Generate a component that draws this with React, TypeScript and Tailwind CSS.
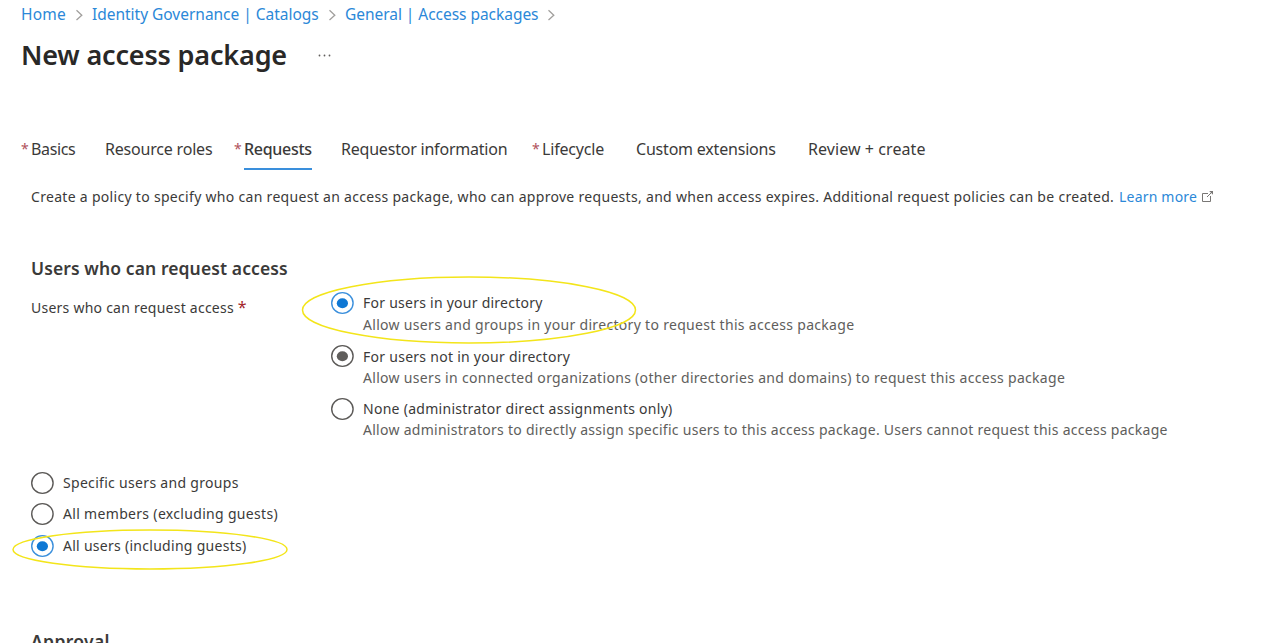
import React from "react";

const crumbs = [
  { label: "Home", cls: "w-[45px] tracking-[0.2px]" },
  { label: "Identity Governance | Catalogs", cls: "w-[227px] tracking-[-0.02px]" },
  { label: "General | Access packages", cls: "w-[193px] tracking-[-0.04px]" },
];

const tabs = [
  { label: "Basics", cls: "w-[45px] mr-[29px] tracking-[-0.35px]", required: true },
  { label: "Resource roles", cls: "w-[108px] mr-[21px] tracking-[-0.2px]" },
  { label: "Requests", cls: "w-[68px] mr-[29px] tracking-[-0.3px]", required: true, active: true },
  { label: "Requestor information", cls: "w-[166px] mr-[25px] tracking-[-0.21px]" },
  { label: "Lifecycle", cls: "w-[63px] mr-[31px] tracking-[-0.17px]", required: true },
  { label: "Custom extensions", cls: "w-[140px] mr-[32px] tracking-[-0.2px]" },
  { label: "Review + create", cls: "w-[118px] tracking-[0.07px]" },
];

function Radio({ state }: { state: "off" | "blue" | "gray" }) {
  const stroke = state === "blue" ? "#3a8fdc" : "#5b5957";
  const fill = state === "blue" ? "#0f78d4" : "#605e5c";
  return (
    <svg width="24" height="24" viewBox="0 0 24 24" className="shrink-0" fill="none">
      <ellipse cx="12.4" cy="12" rx="10.7" ry="10.4" stroke={stroke} strokeWidth="1.4" />
      {state !== "off" && <ellipse cx="12.4" cy="12.2" rx="5.6" ry="5" fill={fill} />}
    </svg>
  );
}

const audience = [
  { state: "blue" as const, title: "For users in your directory", text: "Allow users and groups in your directory to request this access package", track: "tracking-[0.25px] leading-[24px]", textTrack: "tracking-[0.31px] leading-[22px]" },
  { state: "gray" as const, title: "For users not in your directory", text: "Allow users in connected organizations (other directories and domains) to request this access package", track: "tracking-[0.27px] leading-[26px]", textTrack: "tracking-[0.31px] leading-[22px]" },
  { state: "off" as const, title: "None (administrator direct assignments only)", text: "Allow administrators to directly assign specific users to this access package. Users cannot request this access package", track: "tracking-[0.28px] leading-[24px]", textTrack: "tracking-[0.275px] leading-[20px]" },
];

const scope = [
  { state: "off" as const, label: "Specific users and groups", track: "h-[31px] tracking-[0.31px]" },
  { state: "off" as const, label: "All members (excluding guests)", track: "h-[32px] tracking-[0.32px]" },
  { state: "blue" as const, label: "All users (including guests)", track: "h-[31px] tracking-[0.28px]" },
];

export default function App() {
  return (
    <main className="relative h-[643px] w-[1269px] overflow-hidden bg-white font-['Noto_Sans','Open_Sans',sans-serif] text-[14px] whitespace-nowrap text-[#3b3a39]">
      <nav className="flex h-[30px] items-center pl-[21px] text-[15.5px] text-[#2b88d8]">
        {crumbs.map((c) => (
          <React.Fragment key={c.label}>
            <a className={c.cls}>{c.label}</a>
            <svg width="8" height="12" viewBox="0 0 8 12" className="mx-[9px] shrink-0" fill="none" stroke="#a19f9d" strokeWidth="1.3">
              <path d="M1.5 1.3L6.8 6.2L1.5 11.1" />
            </svg>
          </React.Fragment>
        ))}
      </nav>
      <header className="flex h-[50px] items-center pl-[21px]">
        <h1 className="w-[266px] text-[27px] font-semibold tracking-[-0.17px] text-[#292827]">New access package</h1>
        <svg width="14" height="4" viewBox="0 0 14 4" className="ml-[30px]" fill="#605e5c">
          <circle cx="2.5" cy="2.5" r="0.9" />
          <circle cx="7.5" cy="2.5" r="0.9" />
          <circle cx="12.5" cy="2.5" r="0.9" />
        </svg>
      </header>
      <div className="mt-[50px] flex h-[40px] pl-[21px] text-[16px]">
        {tabs.map((t) => (
          <React.Fragment key={t.label}>
            {t.required && <span className="w-[10px] text-[14px] leading-[38px] text-[#b0525c]">*</span>}
            <span className={`${t.cls} leading-[38px] ${t.active ? "border-b-2 border-[#3a8fdc] font-medium" : ""}`}>{t.label}</span>
          </React.Fragment>
        ))}
      </div>
      <p className="mt-[14px] flex h-[24px] items-center pl-[31px]">
        <span className="w-[1088px] tracking-[0.305px]">Create a policy to specify who can request an access package, who can approve requests, and when access expires. Additional request policies can be created.</span>
        <a className="w-[78px] tracking-[0.2px] text-[#2b88d8]">Learn more</a>
        <svg width="13" height="13" viewBox="0 0 13 13" className="ml-[4px]" fill="none" stroke="#797775">
          <path d="M7 3.5H1.5V11.5H9.5V6M6 7L11.3 1.7" />
          <path d="M8.2 1H12V4.8Z" fill="#797775" stroke="none" />
        </svg>
      </p>
      <h2 className="mt-[48px] h-[24px] pl-[31px] text-[17.5px] leading-[24px] font-semibold tracking-[0.1px]">Users who can request access</h2>
      <section className="mt-[11px] flex h-[180px] pl-[31px]">
        <div className="w-[299px] pt-[6px] leading-[20px] tracking-[0.24px]">
          <span>Users who can request access</span> <span className="text-[16px] text-[#a4262c]">*</span>
        </div>
        <div>
          {audience.map((a) => (
            <div key={a.title} className="flex h-[53px]">
              <Radio state={a.state} />
              <div className="ml-[9px]">
                <div className={`h-[23px] ${a.track}`}>{a.title}</div>
                <div className={`h-[20px] text-[#605e5c] ${a.textTrack}`}>{a.text}</div>
              </div>
            </div>
          ))}
        </div>
      </section>
      <section className="flex flex-col pl-[30px]">
        {scope.map((s) => (
          <div key={s.label} className={`flex items-start ${s.track}`}>
            <Radio state={s.state} />
            <span className="ml-[9px] leading-[24px]">{s.label}</span>
          </div>
        ))}
      </section>
      <h2 className="mt-[64px] pl-[31px] text-[17.5px] leading-[24px] font-semibold tracking-[0.35px]">Approval</h2>
      <svg className="pointer-events-none absolute inset-0" width="1269" height="643" fill="none" stroke="#f3e51a" strokeWidth="1.5">
        <ellipse cx="469" cy="310" rx="166.5" ry="33" />
        <ellipse cx="150" cy="549.5" rx="137" ry="19.5" />
      </svg>
    </main>
  );
}
